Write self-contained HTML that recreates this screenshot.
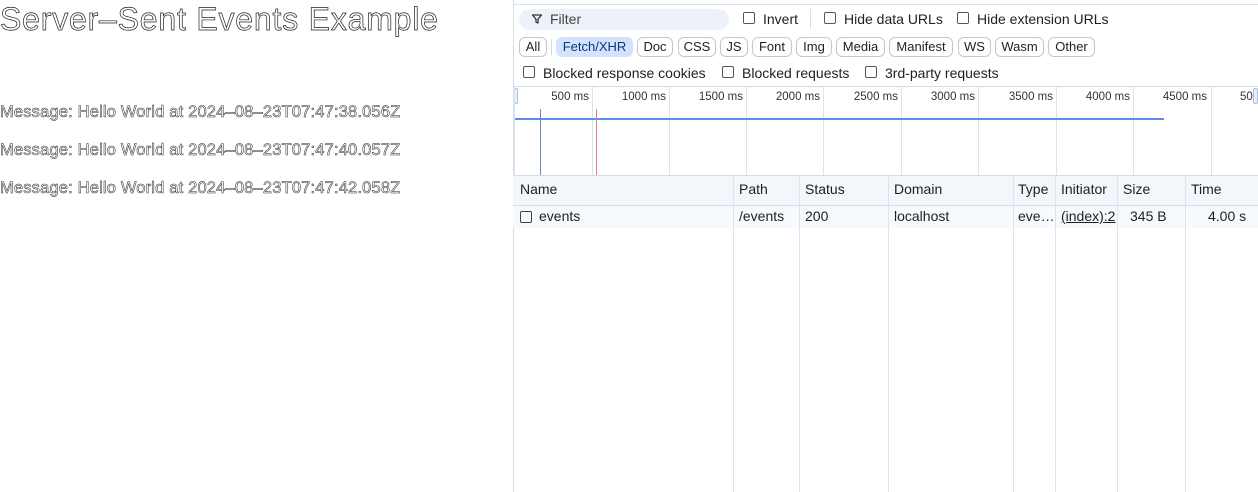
<!DOCTYPE html>
<html><head><style>
*{margin:0;padding:0;box-sizing:border-box}
body{width:1258px;height:492px;background:#fff;position:relative;overflow:hidden;font-family:"Liberation Sans",sans-serif}
.o{position:absolute;left:0;color:#fff;-webkit-text-stroke:0.7px #222;white-space:nowrap}
.a{position:absolute;white-space:nowrap;font-size:14px;color:#1f1f1f}
.chip{position:absolute;top:37px;height:20px;border:1px solid #c4c7cc;border-radius:6px;font-size:13px;line-height:18px;text-align:center;color:#1f1f1f}
.cb{position:absolute;width:12px;height:12px;border:1px solid #555;border-radius:2px}
.vl{position:absolute;width:1px;background:#dbe3ee}
.tl{position:absolute;top:91px;font-size:11.5px;color:#333;text-align:right;width:70px}
</style></head><body>
<div class="o" style="top:1px;font-size:32px;letter-spacing:0.8px">Server–Sent Events Example</div>
<div class="o" style="top:103px;font-size:16.5px;letter-spacing:0.17px;-webkit-text-stroke:0.5px #222">Message: Hello World at 2024–08–23T07:47:38.056Z</div>
<div class="o" style="top:141px;font-size:16.5px;letter-spacing:0.17px;-webkit-text-stroke:0.5px #222">Message: Hello World at 2024–08–23T07:47:40.057Z</div>
<div class="o" style="top:179px;font-size:16.5px;letter-spacing:0.17px;-webkit-text-stroke:0.5px #222">Message: Hello World at 2024–08–23T07:47:42.058Z</div>

<div style="position:absolute;left:513px;top:4px;width:745px;height:1px;background:#d3e3fd"></div>
<div style="position:absolute;left:513px;top:0;width:1px;height:492px;background:#d6dce6"></div>
<div style="position:absolute;left:519px;top:9px;width:210px;height:21px;background:#edf2fa;border-radius:11px"></div>
<svg style="position:absolute;left:531px;top:13px" width="12" height="12" viewBox="0 0 12 12"><path d="M1.5 2h9L7 6.2V10L5 9V6.2z" fill="none" stroke="#333" stroke-width="1.3" stroke-linejoin="round"/></svg>
<div class="a" style="left:550px;top:11px;color:#444">Filter</div>
<div class="cb" style="left:743px;top:12px"></div><div class="a" style="left:763px;top:11px">Invert</div>
<div style="position:absolute;left:810px;top:9px;width:1px;height:20px;background:#ddd"></div>
<div class="cb" style="left:824px;top:12px"></div><div class="a" style="left:844px;top:11px">Hide data URLs</div>
<div class="cb" style="left:957px;top:12px"></div><div class="a" style="left:977px;top:11px">Hide extension URLs</div>

<div class="chip" style="left:519px;width:28px">All</div>
<div style="position:absolute;left:551px;top:39px;width:1px;height:16px;background:#ddd"></div>
<div class="chip" style="left:556px;width:77px;background:#d3e3fd;border-color:#d3e3fd;color:#0b3a7a">Fetch/XHR</div>
<div class="chip" style="left:637px;width:36px">Doc</div>
<div class="chip" style="left:678px;width:38px">CSS</div>
<div class="chip" style="left:720px;width:28px">JS</div>
<div class="chip" style="left:752px;width:40px">Font</div>
<div class="chip" style="left:796px;width:36px">Img</div>
<div class="chip" style="left:836px;width:49px">Media</div>
<div class="chip" style="left:889px;width:64px">Manifest</div>
<div class="chip" style="left:958px;width:33px">WS</div>
<div class="chip" style="left:995px;width:49px">Wasm</div>
<div class="chip" style="left:1048px;width:47px">Other</div>

<div class="cb" style="left:523px;top:66px"></div><div class="a" style="left:543px;top:65px">Blocked response cookies</div>
<div class="cb" style="left:722px;top:66px"></div><div class="a" style="left:742px;top:65px">Blocked requests</div>
<div class="cb" style="left:865px;top:66px"></div><div class="a" style="left:885px;top:65px">3rd-party requests</div>

<div style="position:absolute;left:513px;top:86px;width:745px;height:1px;background:#d6dce6"></div>
<div style="position:absolute;left:514px;top:88px;width:4px;height:16px;border:1px solid #a8c0e8;border-radius:2px;background:#e8effb"></div>
<div style="position:absolute;left:1253px;top:88px;width:5px;height:16px;border:1px solid #a8c0e8;border-radius:2px;background:#e8effb"></div>
<div class="vl" style="left:514px;top:87px;height:88px"></div>
<div class="vl" style="left:592px;top:87px;height:88px"></div>
<div class="vl" style="left:669px;top:87px;height:88px"></div>
<div class="vl" style="left:746px;top:87px;height:88px"></div>
<div class="vl" style="left:823px;top:87px;height:88px"></div>
<div class="vl" style="left:901px;top:87px;height:88px"></div>
<div class="vl" style="left:978px;top:87px;height:88px"></div>
<div class="vl" style="left:1056px;top:87px;height:88px"></div>
<div class="vl" style="left:1133px;top:87px;height:88px"></div>
<div class="vl" style="left:1211px;top:87px;height:88px"></div>
<div class="tl" style="left:519px">500 ms</div>
<div class="tl" style="left:596px">1000 ms</div>
<div class="tl" style="left:673px">1500 ms</div>
<div class="tl" style="left:750px">2000 ms</div>
<div class="tl" style="left:828px">2500 ms</div>
<div class="tl" style="left:905px">3000 ms</div>
<div class="tl" style="left:983px">3500 ms</div>
<div class="tl" style="left:1060px">4000 ms</div>
<div class="tl" style="left:1137px">4500 ms</div>
<div class="a" style="left:1240px;top:91px;font-size:11.5px;color:#333">50</div>
<div style="position:absolute;left:515px;top:118px;width:649px;height:2px;background:#5b8ee6"></div>
<div style="position:absolute;left:540px;top:109px;width:1px;height:66px;background:#6f86b8"></div>
<div style="position:absolute;left:596px;top:109px;width:1px;height:66px;background:#e08080"></div>

<div style="position:absolute;left:513px;top:175px;width:745px;height:31px;background:#f3f6fb;border-top:1px solid #d6dce6;border-bottom:1px solid #d6dce6"></div>
<div style="position:absolute;left:513px;top:206px;width:745px;height:22px;background:#f6f9fe"></div>
<div class="vl" style="left:733px;top:176px;height:316px"></div>
<div class="vl" style="left:799px;top:176px;height:316px"></div>
<div class="vl" style="left:888px;top:176px;height:316px"></div>
<div class="vl" style="left:1013px;top:176px;height:316px"></div>
<div class="vl" style="left:1055px;top:176px;height:316px"></div>
<div class="vl" style="left:1117px;top:176px;height:316px"></div>
<div class="vl" style="left:1185px;top:176px;height:316px"></div>
<div class="a" style="left:520px;top:181px">Name</div>
<div class="a" style="left:739px;top:181px">Path</div>
<div class="a" style="left:805px;top:181px">Status</div>
<div class="a" style="left:894px;top:181px">Domain</div>
<div class="a" style="left:1018px;top:181px">Type</div>
<div class="a" style="left:1061px;top:181px">Initiator</div>
<div class="a" style="left:1123px;top:181px">Size</div>
<div class="a" style="left:1191px;top:181px">Time</div>
<div class="cb" style="left:520px;top:211px;border-color:#444"></div>
<div class="a" style="left:539px;top:208px">events</div>
<div class="a" style="left:739px;top:208px">/events</div>
<div class="a" style="left:805px;top:208px">200</div>
<div class="a" style="left:894px;top:208px">localhost</div>
<div class="a" style="left:1018px;top:208px">eve…</div>
<div class="a" style="left:1061px;top:208px;text-decoration:underline;width:55px;overflow:hidden">(index):2</div>
<div class="a" style="left:1130px;top:208px">345 B</div>
<div class="a" style="left:1208px;top:208px">4.00 s</div>
</body></html>
